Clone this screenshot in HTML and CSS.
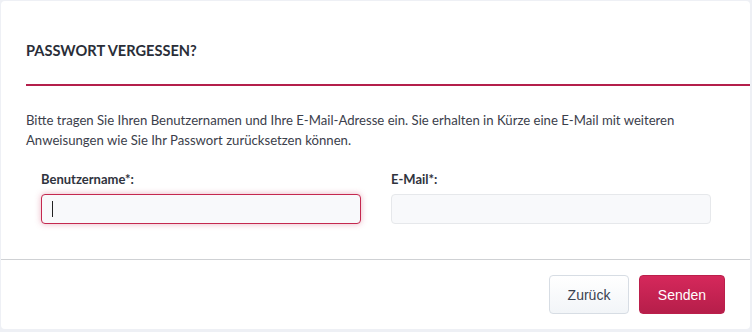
FILE: index.html
```html
<!DOCTYPE html>
<html lang="de">
<head>
<meta charset="utf-8">
<title>Passwort vergessen?</title>
<link rel="stylesheet" href="styles.css">
</head>
<body>
<div class="page">
  <form class="card">
    <div class="card-header">
      <h1 class="title">PASSWORT VERGESSEN?</h1>
    </div>
    <div class="card-body">
      <p class="intro">Bitte tragen Sie Ihren Benutzernamen und Ihre E-Mail-Adresse ein. Sie erhalten in Kürze eine E-Mail mit weiteren Anweisungen wie Sie Ihr Passwort zurücksetzen können.</p>
      <div class="fields">
        <div class="field">
          <label class="label" for="user">Benutzername*:</label>
          <div class="input-wrap">
            <input class="input input-focus" id="user" type="text">
            <span class="caret"></span>
          </div>
        </div>
        <div class="field">
          <label class="label" for="mail">E-Mail*:</label>
          <div class="input-wrap">
            <input class="input" id="mail" type="text">
          </div>
        </div>
      </div>
    </div>
    <div class="card-footer">
      <button type="button" class="btn btn-default">Zurück</button>
      <button type="button" class="btn btn-primary">Senden</button>
    </div>
  </form>
</div>
</body>
</html>
```

FILE: styles.css
```css
html, body {
  margin: 0;
  padding: 0;
  background: #eef0f5;
}
.page {
  padding: 1px 2px 3px 1px;
  height: 332px;
  box-sizing: border-box;
}
.card {
  background: #ffffff;
  border-radius: 4px;
  height: 328px;
  display: flex;
  flex-direction: column;
  font-family: Lato, "Open Sans", sans-serif;
  color: #3b404b;
}
.card-header {
  margin-left: 25px;
  padding-top: 40px;
  padding-bottom: 23px;
  border-bottom: 2px solid #b41f4b;
}
.title {
  margin: 0;
  font-size: 14.6px;
  line-height: 20px;
  font-weight: 700;
  color: #2a2e38;
}
.card-body {
  padding: 24px 26px 35px 25px;
  border-bottom: 1px solid #cfd1d4;
}
.intro {
  margin: 0;
  font-size: 13.15px;
  line-height: 20px;
}
.fields {
  display: flex;
  gap: 30px;
  padding-left: 15px;
  margin-top: 19px;
}
.field {
  width: 320px;
  display: flex;
  flex-direction: column;
}
.label {
  font-size: 13px;
  line-height: 20px;
  font-weight: 700;
  color: #2f333d;
  margin-bottom: 5px;
}
.input-wrap {
  position: relative;
}
.input {
  box-sizing: border-box;
  width: 320px;
  height: 30px;
  margin: 0;
  border: 1px solid #e6e8eb;
  border-radius: 4px;
  background: #f8f9fb;
  outline: none;
  display: block;
}
.input-focus {
  border-color: #c4284f;
  box-shadow: 0 0 6px rgba(196, 40, 79, 0.35);
}
.caret {
  position: absolute;
  left: 11px;
  top: 7px;
  width: 1px;
  height: 16px;
  background: #222;
}
.card-footer {
  display: flex;
  justify-content: flex-end;
  gap: 10px;
  padding: 15px 25px 0 0;
}
.btn {
  height: 39px;
  border-radius: 4px;
  font-family: "Liberation Sans", Arial, sans-serif;
  font-size: 14px;
  padding: 0;
  cursor: pointer;
}
.btn-default {
  width: 80px;
  border: 1px solid #d7dde4;
  background: linear-gradient(#ffffff, #f2f5f8);
  color: #3b4250;
}
.btn-primary {
  width: 86px;
  border: 1px solid #bb1f4b;
  background: linear-gradient(#d5285b, #b61e4a);
  color: #ffffff;
}
```
